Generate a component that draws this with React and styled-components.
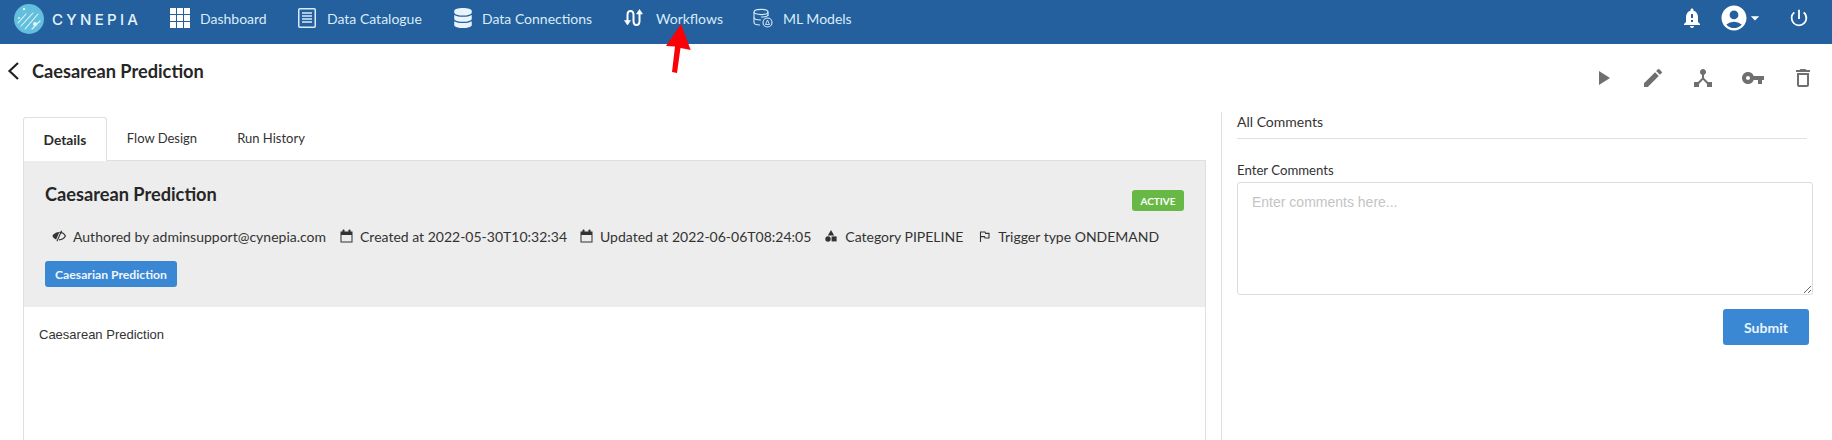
import * as React from 'react';
import styled, { createGlobalStyle } from 'styled-components';
import {
  MdPlayArrow,
  MdEdit,
  MdDeviceHub,
  MdVpnKey,
  MdOutlineDelete,
  MdNotificationImportant,
  MdAccountCircle,
  MdArrowDropDown,
  MdPowerSettingsNew,
} from 'react-icons/md';
import { FaDatabase } from 'react-icons/fa';

const GlobalStyle = createGlobalStyle`
  html, body {
    margin: 0;
    padding: 0;
    height: 440px;
    overflow: hidden;
    background: #fff;
    font-family: Lato, "Liberation Sans", sans-serif;
    color: #212121;
  }
`;

const Page = styled.div`
  position: relative;
  width: 1832px;
  height: 440px;
  overflow: hidden;
`;

const Navbar = styled.div`
  box-sizing: border-box;
  height: 44px;
  padding-bottom: 8px;
  background: #23609d;
  display: flex;
  align-items: center;
`;

const Brand = styled.div`
  display: flex;
  align-items: center;
  width: 170px;
  margin-top: 2px;
  padding-left: 14px;
  box-sizing: border-box;
`;

const BrandName = styled.span`
  margin-left: 8px;
  font-family: Inter, "Open Sans", sans-serif;
  font-size: 15px;
  font-weight: 500;
  letter-spacing: 3.3px;
  color: #e3f3fa;
`;

const NavItem = styled.div`
  display: flex;
  align-items: center;
  width: ${(p) => p.$width}px;
  color: #d9ecfa;
  font-size: 14px;
  svg {
    flex: none;
    margin-right: ${(p) => p.$gap}px;
  }
`;

const NavRight = styled.div`
  margin-left: auto;
  display: flex;
  align-items: center;
  color: #fff;
  padding-right: 22px;
`;

const BellWrap = styled.div`
  display: flex;
  margin-right: 15px;
`;

const UserWrap = styled.div`
  display: flex;
  align-items: center;
  margin-right: 27px;
`;

const Caret = styled.div`
  display: flex;
  margin-left: -4px;
  margin-right: -4px;
`;

const TitleRow = styled.div`
  height: 68px;
  display: flex;
  justify-content: space-between;
  padding: 0 17px 0 7px;
`;

const BackTitle = styled.div`
  display: flex;
  align-items: center;
  height: 54px;
  color: #212121;
`;

const PageTitle = styled.h1`
  margin: 0 0 0 12px;
  font-size: 18.2px;
  font-weight: 700;
  color: #262626;
`;

const Actions = styled.div`
  display: flex;
  align-items: center;
  height: 68px;
  color: #6f6f6f;
  gap: 26px;
`;

const Content = styled.div`
  display: flex;
  padding-left: 23px;
`;

const LeftCol = styled.div`
  width: 1183px;
  padding-top: 5px;
`;

const Tabs = styled.div`
  display: flex;
  height: 43px;
`;

const Tab = styled.div`
  box-sizing: border-box;
  height: ${(p) => (p.$active ? 44 : 43)}px;
  padding: 0 ${(p) => (p.$active ? 19.5 : 20)}px;
  display: flex;
  align-items: center;
  font-size: ${(p) => (p.$active ? 13.8 : 13)}px;
  font-weight: ${(p) => (p.$active ? 700 : 400)};
  color: ${(p) => (p.$active ? '#2b2b2b' : '#333')};
  background: #fff;
  position: relative;
  z-index: 1;
  ${(p) =>
    p.$active
      ? 'border: 1px solid #e0e0e0; border-bottom: 0; border-radius: 3px 3px 0 0;'
      : 'padding-bottom: 2px;'}
`;

const Panel = styled.div`
  border: 1px solid #e0e0e0;
  border-bottom: 0;
  height: 280px;
`;

const PanelHead = styled.div`
  box-sizing: border-box;
  height: 146px;
  background: #ededed;
  padding: 21px 21px 0 21px;
`;

const HeadTop = styled.div`
  display: flex;
  justify-content: space-between;
  align-items: flex-start;
`;

const PanelTitle = styled.h2`
  margin: 0;
  font-size: 18.2px;
  font-weight: 700;
  line-height: 24px;
  color: #262626;
`;

const Badge = styled.span`
  margin-top: 8px;
  width: 52px;
  height: 21px;
  border-radius: 3px;
  background: #68b845;
  color: #fff;
  font-size: 10px;
  font-weight: 700;
  display: flex;
  align-items: center;
  justify-content: center;
`;

const Meta = styled.div`
  display: flex;
  align-items: center;
  height: 20px;
  margin-top: 15px;
  padding-left: 7px;
  font-size: 14px;
  color: #333;
`;

const MetaItem = styled.div`
  display: flex;
  align-items: center;
  margin-right: ${(p) => p.$gap}px;
  svg {
    flex: none;
    margin-right: ${(p) => p.$iconGap}px;
  }
`;

const Tag = styled.div`
  margin-top: 15px;
  width: 132px;
  height: 26px;
  border-radius: 3px;
  background: #3a87d3;
  color: #eef6fc;
  font-size: 12.2px;
  font-weight: 700;
  display: flex;
  align-items: center;
  justify-content: center;
`;

const Description = styled.p`
  margin: 19px 0 0 15px;
  font-family: "Liberation Sans", Arial, sans-serif;
  font-size: 13px;
  line-height: 18px;
  color: #333;
`;

const RightCol = styled.div`
  margin-left: 15px;
  width: 576px;
  height: 328px;
  border-left: 1px solid #e0e0e0;
  padding-left: 15px;
`;

const CommentsHead = styled.div`
  height: 26px;
  width: 570px;
  border-bottom: 1px solid #e0e0e0;
  font-size: 14px;
  line-height: 20px;
  color: #333;
`;

const FieldLabel = styled.label`
  display: block;
  margin-top: 21px;
  font-size: 13.2px;
  line-height: 20px;
  color: #333;
`;

const CommentBox = styled.textarea`
  display: block;
  box-sizing: border-box;
  margin-top: 2px;
  width: 576px;
  height: 113px;
  padding: 11px 14px;
  border: 1px solid #dcdcdc;
  border-radius: 3px;
  font-family: "Liberation Sans", Arial, sans-serif;
  font-size: 14px;
  outline: none;
  &::placeholder {
    color: #c4c4c4;
  }
`;

const SubmitRow = styled.div`
  display: flex;
  justify-content: flex-end;
  width: 572px;
  margin-top: 14px;
`;

const Submit = styled.button`
  width: 86px;
  height: 36px;
  border: 0;
  border-radius: 3px;
  background: #3a87d3;
  color: #e9f4fc;
  font-family: Lato, sans-serif;
  font-size: 14px;
  font-weight: 700;
`;

const ArrowMark = styled.svg`
  position: absolute;
  left: 665px;
  top: 22px;
`;

function Logo() {
  return (
    <svg width="30" height="30" viewBox="0 0 30 30">
      <circle cx="15" cy="15" r="15" fill="#62bfdd" />
      <g stroke="#e6f6fb" strokeWidth="1.1" strokeLinecap="round">
        <path d="M4 19 L12 10" />
        <path d="M7 22 L19 9" />
        <path d="M11 25 L24 10" />
        <path d="M18 25 L26 17" />
      </g>
      <circle cx="10" cy="5" r="1.2" fill="#e6f6fb" />
      <circle cx="21" cy="20" r="2" fill="#e6f6fb" />
      <circle cx="5" cy="14" r="1" fill="#e6f6fb" />
    </svg>
  );
}

function GridIcon() {
  return (
    <svg width="20" height="20" viewBox="0 0 20 20" fill="#fff">
      {[0, 7, 14].map((y) =>
        [0, 7, 14].map((x) => <rect key={`${x}-${y}`} x={x} y={y} width="6" height="6" />)
      )}
    </svg>
  );
}

function CatalogueIcon() {
  return (
    <svg width="18" height="20" viewBox="0 0 18 20" fill="none" stroke="#d9ecfa">
      <rect x="0.75" y="0.75" width="16.5" height="18.5" rx="1" strokeWidth="1.5" />
      <path d="M4 5 H14 M4 8 H14 M4 11 H14 M4 14 H14" strokeWidth="1.3" />
    </svg>
  );
}

function WorkflowIcon() {
  return (
    <svg width="20" height="18" viewBox="0 0 20 18" fill="none" stroke="#fff" strokeWidth="2">
      <path d="M3.5 13 V6 Q3.5 2 6.5 2 Q9.5 2 9.5 6 V12 Q9.5 16 12.5 16 Q15.5 16 15.5 12 V3" />
      <path d="M0.5 11.5 L3.5 16 L6.5 11.5 Z" fill="#fff" strokeWidth="0.6" />
      <path d="M12.5 5 L15.5 0.5 L18.5 5 Z" fill="#fff" strokeWidth="0.6" />
    </svg>
  );
}

function ModelIcon() {
  return (
    <svg width="20" height="20" viewBox="0 0 20 20" fill="none" stroke="#d9ecfa" strokeWidth="1.1">
      <ellipse cx="8" cy="4" rx="7" ry="2.6" />
      <path d="M1 4 V14.5 C1 16 4 17 7 17 M15 4 V8" />
      <path d="M1 9.5 C1 11 4 12 8 12 M15 6.5 C15 8 12 9 8 9" />
      <circle cx="14.5" cy="14.5" r="4.5" />
      <path d="M14.5 12 L12.5 16.5 H16.5 Z" strokeWidth="0.9" />
    </svg>
  );
}

function EyeIcon() {
  return (
    <svg width="14" height="12" viewBox="0 0 14 12">
      <path d="M0.3 6 C2 3.2 4.4 2 7.4 2 L4.2 9.6 C2.6 9 1.3 7.7 0.3 6 Z" fill="#333" />
      <path d="M9.6 0.8 L5 11.2" stroke="#333" strokeWidth="1.1" fill="none" />
      <path d="M7.5 2.4 C10 2.4 12.3 3.8 13.4 6 C12.2 8.4 10 9.8 7 9.8" stroke="#333" strokeWidth="1.2" fill="none" />
    </svg>
  );
}

function CalendarIcon() {
  return (
    <svg width="13" height="14" viewBox="0 0 13 14" fill="#333">
      <path d="M0.5 2.5 H12.5 V13.5 H0.5 Z M1.5 6 V12.5 H11.5 V6 Z" fillRule="evenodd" />
      <rect x="2.5" y="0.5" width="2" height="3.5" rx="0.8" />
      <rect x="8.5" y="0.5" width="2" height="3.5" rx="0.8" />
    </svg>
  );
}

function ShapesIcon() {
  return (
    <svg width="12" height="12" viewBox="0 0 12 12" fill="#333">
      <path d="M6 0 L9.2 5.6 H2.8 Z" />
      <circle cx="3" cy="9" r="2.7" />
      <rect x="6.6" y="6.4" width="5" height="5" />
    </svg>
  );
}

function FlagIcon() {
  return (
    <svg width="11" height="11" viewBox="0 0 11 11" fill="none" stroke="#333" strokeWidth="1.1">
      <path d="M1.5 11 V1 H6 L6.6 2.4 H10 V7 H6 L5.4 5.6 H1.5" />
    </svg>
  );
}

function BackChevron() {
  return (
    <svg width="13" height="18" viewBox="0 0 13 18" fill="none" stroke="#212121" strokeWidth="2.2">
      <path d="M11 1 L2.5 9 L11 17" />
    </svg>
  );
}

function RedArrow() {
  return (
    <ArrowMark width="28" height="54" viewBox="0 0 28 54">
      <path d="M16 2 L25.7 28 L15.5 26 L12 51 L7 50 L10 24.5 L1 24 Z" fill="#fb0007" />
    </ArrowMark>
  );
}

const navItems = [
  { label: 'Dashboard', icon: <GridIcon />, width: 128, gap: 10 },
  { label: 'Data Catalogue', icon: <CatalogueIcon />, width: 155, gap: 11 },
  { label: 'Data Connections', icon: <FaDatabase size={20} color="#e8f3fb" />, width: 171, gap: 9 },
  { label: 'Workflows', icon: <WorkflowIcon />, width: 129, gap: 12 },
  { label: 'ML Models', icon: <ModelIcon />, width: 110, gap: 10 },
];

const metaItems = [
  { label: 'Authored by adminsupport@cynepia.com', icon: <EyeIcon />, gap: 14, iconGap: 7 },
  { label: 'Created at 2022-05-30T10:32:34', icon: <CalendarIcon />, gap: 13, iconGap: 7 },
  { label: 'Updated at 2022-06-06T08:24:05', icon: <CalendarIcon />, gap: 14, iconGap: 7 },
  { label: 'Category PIPELINE', icon: <ShapesIcon />, gap: 16, iconGap: 8 },
  { label: 'Trigger type ONDEMAND', icon: <FlagIcon />, gap: 0, iconGap: 8 },
];

export default function App() {
  return (
    <Page>
      <GlobalStyle />
      <Navbar>
        <Brand>
          <Logo />
          <BrandName>CYNEPIA</BrandName>
        </Brand>
        {navItems.map((item) => (
          <NavItem key={item.label} $width={item.width} $gap={item.gap}>
            {item.icon}
            {item.label}
          </NavItem>
        ))}
        <NavRight>
          <BellWrap>
            <MdNotificationImportant size={24} />
          </BellWrap>
          <UserWrap>
            <MdAccountCircle size={30} />
            <Caret>
              <MdArrowDropDown size={20} />
            </Caret>
          </UserWrap>
          <MdPowerSettingsNew size={22} />
        </NavRight>
      </Navbar>

      <TitleRow>
        <BackTitle>
          <BackChevron />
          <PageTitle>Caesarean Prediction</PageTitle>
        </BackTitle>
        <Actions>
          <MdPlayArrow size={24} />
          <MdEdit size={24} />
          <MdDeviceHub size={24} />
          <MdVpnKey size={24} />
          <MdOutlineDelete size={24} />
        </Actions>
      </TitleRow>

      <Content>
        <LeftCol>
          <Tabs>
            <Tab $active>Details</Tab>
            <Tab>Flow Design</Tab>
            <Tab>Run History</Tab>
          </Tabs>
          <Panel>
            <PanelHead>
              <HeadTop>
                <PanelTitle>Caesarean Prediction</PanelTitle>
                <Badge>ACTIVE</Badge>
              </HeadTop>
              <Meta>
                {metaItems.map((item) => (
                  <MetaItem key={item.label} $gap={item.gap} $iconGap={item.iconGap}>
                    {item.icon}
                    {item.label}
                  </MetaItem>
                ))}
              </Meta>
              <Tag>Caesarian Prediction</Tag>
            </PanelHead>
            <Description>Caesarean Prediction</Description>
          </Panel>
        </LeftCol>
        <RightCol>
          <CommentsHead>All Comments</CommentsHead>
          <FieldLabel>Enter Comments</FieldLabel>
          <CommentBox placeholder="Enter comments here..." />
          <SubmitRow>
            <Submit>Submit</Submit>
          </SubmitRow>
        </RightCol>
      </Content>
      <RedArrow />
    </Page>
  );
}
